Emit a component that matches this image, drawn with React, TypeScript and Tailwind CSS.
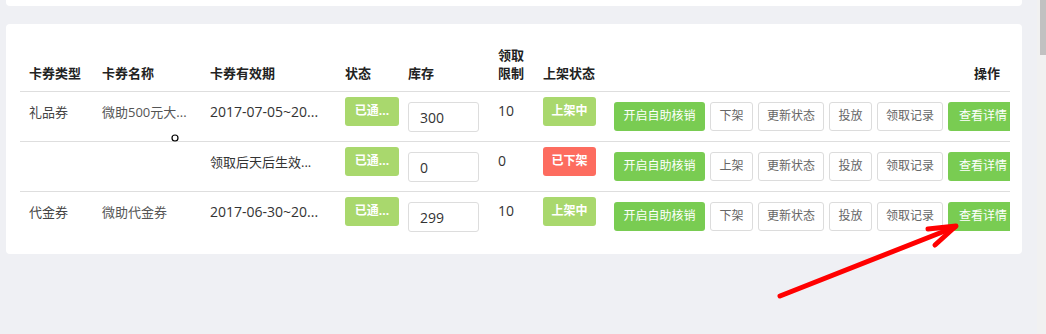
import React from "react";

type Row = {
  type: string;
  name: string;
  period: string;
  stock: string;
  limit: string;
  online: boolean;
};

const rows: Row[] = [
  { type: "礼品券", name: "微助500元大...", period: "2017-07-05~20...", stock: "300", limit: "10", online: true },
  { type: "", name: "", period: "领取后天后生效...", stock: "0", limit: "0", online: false },
  { type: "代金券", name: "微助代金券", period: "2017-06-30~20...", stock: "299", limit: "10", online: true },
];

function GhostButton({ label, w }: { label: string; w: string }) {
  return (
    <button
      className={`${w} h-[29px] shrink-0 rounded-[3px] border border-[#dcdcdc] bg-white text-[12px] text-[#666]`}
    >
      {label}
    </button>
  );
}

function GreenButton({ label, w }: { label: string; w: string }) {
  return (
    <button className={`${w} h-[29px] shrink-0 rounded-[3px] bg-[#79cc52] text-[12px] text-white`}>
      {label}
    </button>
  );
}

export default function App() {
  return (
    <div
      className="relative flex h-[334px] w-[1046px] overflow-hidden bg-[#eff0f4] text-[#333]"
      style={{ fontFamily: '"Open Sans", "Noto Sans CJK SC", sans-serif' }}
    >
      <div className="flex-1 pl-[6px] pr-[15px]">
        <div className="h-[6px] rounded-b-[4px] bg-white" />
        <div className="mt-[18px] rounded-[4px] bg-white pl-[14px] pr-[12px] pt-[20px] pb-[13px]">
          <div className="overflow-hidden">
            <table className="w-[990px] table-fixed border-collapse">
              <colgroup>
                <col className="w-[73px]" />
                <col className="w-[108px]" />
                <col className="w-[135px]" />
                <col className="w-[63px]" />
                <col className="w-[90px]" />
                <col className="w-[45px]" />
                <col className="w-[71px]" />
                <col />
              </colgroup>
              <thead>
                <tr className="h-[47px] border-b border-[#dedede] text-left align-bottom text-[13px] font-bold leading-[18px] text-[#222]">
                  <th className="pb-[9px] pl-[9px]">卡券类型</th>
                  <th className="pb-[9px] pl-[9px]">卡券名称</th>
                  <th className="pb-[9px] pl-[9px]">卡券有效期</th>
                  <th className="pb-[9px] pl-[9px]">状态</th>
                  <th className="pb-[9px] pl-[9px]">库存</th>
                  <th className="pb-[9px] pl-[9px] pr-[8px]">领取限制</th>
                  <th className="pb-[9px] pl-[9px]">上架状态</th>
                  <th className="pb-[9px] pr-[10px] text-right">操作</th>
                </tr>
              </thead>
              <tbody>
                {rows.map((r, i) => (
                  <tr
                    key={i}
                    className={`h-[50px] align-top text-[13px] ${i < rows.length - 1 ? "border-b border-[#dedede]" : ""}`}
                  >
                    <td className="pl-[9px] pt-[10px] leading-[20px] text-[#444]">{r.type}</td>
                    <td className="pl-[9px] pt-[10px] leading-[20px] whitespace-nowrap text-[#555]">{r.name}</td>
                    <td
                      className={`pl-[9px] pt-[10px] leading-[20px] whitespace-nowrap text-[#333] ${
                        r.period.startsWith("2") ? "text-[14px]" : ""
                      }`}
                    >
                      {r.period}
                    </td>
                    <td className="pl-[9px] pt-[5px]">
                      <div className="flex h-[29px] w-[54px] items-center justify-center rounded-[3px] bg-[#a9d86d] text-[12px] font-bold text-white">
                        已通...
                      </div>
                    </td>
                    <td className="pl-[9px] pt-[10px]">
                      <div className="flex h-[30px] w-[71px] items-center rounded-[3px] border border-[#dddddd] pl-[11px] pt-[2px] text-[14px] text-[#333]">
                        {r.stock}
                      </div>
                    </td>
                    <td className="pl-[9px] pt-[9px] leading-[20px] text-[14px] text-[#333]">{r.limit}</td>
                    <td className="pl-[9px] pt-[5px]">
                      <div
                        className={`flex h-[29px] w-[53px] items-center justify-center rounded-[3px] text-[12px] font-bold text-white ${
                          r.online ? "bg-[#a9d86d]" : "bg-[#fd6c5f]"
                        }`}
                      >
                        {r.online ? "上架中" : "已下架"}
                      </div>
                    </td>
                    <td className="pl-[9px] pt-[10px]">
                      <div className="flex gap-[5px] whitespace-nowrap">
                        <GreenButton label="开启自助核销" w="w-[91px]" />
                        <GhostButton label={r.online ? "下架" : "上架"} w="w-[43px]" />
                        <GhostButton label="更新状态" w="w-[66px]" />
                        <GhostButton label="投放" w="w-[43px]" />
                        <GhostButton label="领取记录" w="w-[66px]" />
                        <GreenButton label="查看详情" w="w-[70px]" />
                      </div>
                    </td>
                  </tr>
                ))}
              </tbody>
            </table>
          </div>
        </div>
      </div>
      <div className="w-[9px] bg-[#f1f1f1] pl-[3px]">
        <div className="h-[55px] w-[6px] bg-[#c1c1c1]" />
      </div>

      <svg className="pointer-events-none absolute left-0 top-0" width="1046" height="334">
        <circle cx="175" cy="138" r="3" fill="white" stroke="black" strokeWidth="1.2" />
        <g stroke="#ff0000" strokeWidth="5" strokeLinecap="round" strokeLinejoin="round" fill="none">
          <line x1="780" y1="296" x2="955" y2="227" />
          <polyline points="928,229 956,226 935,245" />
        </g>
      </svg>
    </div>
  );
}
